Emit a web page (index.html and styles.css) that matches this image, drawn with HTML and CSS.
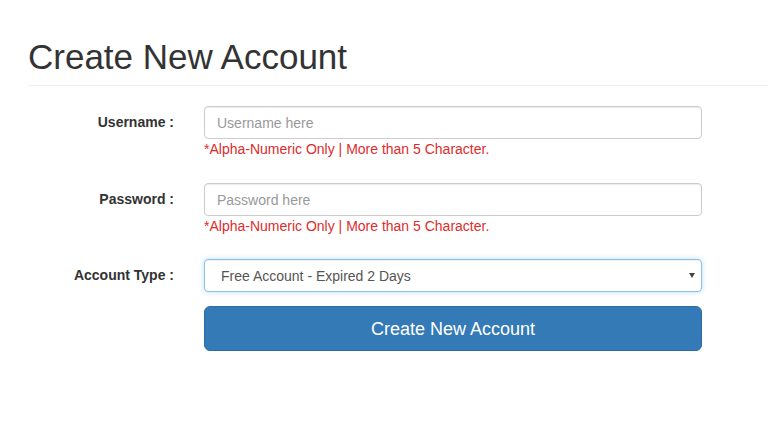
FILE: index.html
```html
<!DOCTYPE html>
<html>
<head>
<meta charset="utf-8">
<link rel="stylesheet" href="styles.css">
</head>
<body>
<div class="page">
  <div class="page-header">
    <h1 class="title">Create New Account</h1>
  </div>
  <form class="form">
    <div class="row">
      <label class="label">Username :</label>
      <div class="field">
        <input class="input" type="text" placeholder="Username here">
        <div class="help">*Alpha-Numeric Only | More than 5 Character.</div>
      </div>
    </div>
    <div class="row row-tight">
      <label class="label">Password :</label>
      <div class="field">
        <input class="input" type="password" placeholder="Password here">
        <div class="help">*Alpha-Numeric Only | More than 5 Character.</div>
      </div>
    </div>
    <div class="row row-tight">
      <label class="label">Account Type :</label>
      <div class="field">
        <div class="select-wrap">
          <select class="input select">
            <option>Free Account - Expired 2 Days</option>
          </select>
          <span class="arrow"></span>
        </div>
      </div>
    </div>
    <div class="row">
      <div class="label"></div>
      <div class="field">
        <button type="button" class="btn">Create New Account</button>
      </div>
    </div>
  </form>
</div>
</body>
</html>
```

FILE: styles.css
```css
* { box-sizing: border-box; }
html, body { margin: 0; padding: 0; background: #fff; }
body {
  font-family: "Liberation Sans", Arial, sans-serif;
  font-size: 14px;
  color: #333;
  line-height: 1.42857;
}
.page { padding: 0 0 0 28px; }
.page-header {
  margin-top: 38px;
  padding-bottom: 9px;
  border-bottom: 1px solid #eee;
  margin-bottom: 20px;
}
.title {
  margin: 0;
  font-size: 35px;
  font-weight: 400;
  line-height: 38px;
  color: #333;
}
.form { display: flex; flex-direction: column; }
.row {
  display: grid;
  grid-template-columns: 146px 498px;
  column-gap: 30px;
  margin-bottom: 15px;
}
.row-tight { margin-bottom: 14px; }
.label {
  font-weight: 700;
  text-align: right;
  padding-top: 7px;
  color: #333;
}
.field { display: flex; flex-direction: column; }
.input {
  display: block;
  width: 100%;
  height: 33px;
  padding: 6px 12px;
  font-family: "Liberation Sans", Arial, sans-serif;
  font-size: 14px;
  color: #555;
  background: #fff;
  border: 1px solid #ccc;
  border-radius: 4px;
  box-shadow: inset 0 1px 1px rgba(0,0,0,.075);
  outline: none;
}
.input::placeholder { color: #999; }
.help {
  margin-top: 1px;
  margin-bottom: 10px;
  font-size: 14px;
  line-height: 18px;
  color: #dd2c2c;
}
.select-wrap { position: relative; }
.select {
  appearance: none;
  -webkit-appearance: none;
  padding-left: 16px;
  border-color: #8fc1e6;
  box-shadow: inset 0 1px 1px rgba(0,0,0,.075), 0 0 5px rgba(102,175,233,.45);
}
.arrow {
  position: absolute;
  right: 7px;
  top: 14px;
  width: 0;
  height: 0;
  border-left: 3px solid transparent;
  border-right: 3px solid transparent;
  border-top: 5px solid #444;
}
.btn {
  display: block;
  width: 100%;
  height: 45px;
  padding: 10px 16px;
  font-family: "Liberation Sans", Arial, sans-serif;
  font-size: 18px;
  line-height: 24px;
  color: #fff;
  background: #337ab7;
  border: 1px solid #2e6da4;
  border-radius: 6px;
}
```
